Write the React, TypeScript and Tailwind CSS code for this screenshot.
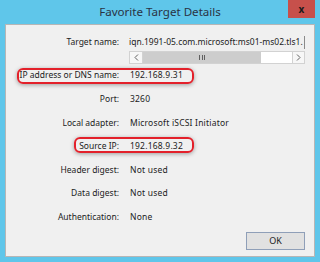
import React from "react"

const rows: { label: string; value: string }[] = [
  { label: "IP address or DNS name:", value: "192.168.9.31" },
  { label: "Port:", value: "3260" },
  { label: "Local adapter:", value: "Microsoft iSCSI Initiator" },
  { label: "Source IP:", value: "192.168.9.32" },
  { label: "Header digest:", value: "Not used" },
  { label: "Data digest:", value: "Not used" },
  { label: "Authentication:", value: "None" },
]

function Row({ label, value }: { label: string; value: string }) {
  return (
    <div className="flex h-[23.6px] items-center">
      <div className="w-[108px] shrink-0 whitespace-nowrap text-right">{label}</div>
      <div className="ml-[11px] whitespace-nowrap tracking-[0.2px]">{value}</div>
    </div>
  )
}

export default function App() {
  return (
    <div
      className="flex h-[262px] w-[320px] flex-col bg-[#5fc6ea] text-[8.5px] text-[#222]"
      style={{ fontFamily: '"Noto Sans", "Open Sans", sans-serif' }}
    >
      {/* title bar */}
      <div className="relative flex h-[24px] shrink-0 items-center justify-center">
        <span className="pb-px text-[11.6px] text-[#2a3344]">Favorite Target Details</span>
        <button className="absolute right-[5px] top-0 flex h-[18px] w-[27px] items-center justify-center bg-[#c7504b] text-[10px] font-bold leading-none text-[#1a1a1a]">
          x
        </button>
      </div>

      {/* body */}
      <div className="relative mx-[5px] mb-[5px] flex flex-1 flex-col border border-[#b6b6b6] bg-[#f0f0f0] pl-[5px] pt-[9px]">
        <div className="flex h-[16px] items-center">
          <div className="w-[108px] shrink-0 text-right">Target name:</div>
          <div className="ml-[9px] flex h-[13px] w-[177px] items-center overflow-hidden whitespace-nowrap border-r border-[#8a8a8a] pl-[1px]">
            iqn.1991-05.com.microsoft:ms01-ms02.tls1.
          </div>
        </div>

        {/* horizontal scrollbar */}
        <div className="ml-[118px] mt-px flex h-[13px] w-[176px] border border-[#d2d2d2] bg-white">
          <div className="flex w-[13px] items-center justify-center border-r border-[#d2d2d2] bg-[#f7f7f7]">
            <svg width="5" height="7" viewBox="0 0 5 7">
              <path d="M4 0.5 L1 3.5 L4 6.5" fill="none" stroke="#606060" strokeWidth="1" />
            </svg>
          </div>
          <div className="flex w-[118px] items-center justify-center gap-[1.5px] bg-[#cdcdcd]">
            <div className="h-[5px] w-px bg-[#606060]" />
            <div className="h-[5px] w-px bg-[#606060]" />
            <div className="h-[5px] w-px bg-[#606060]" />
          </div>
          <div className="flex-1" />
          <div className="flex w-[12px] items-center justify-center border-l border-[#d2d2d2] bg-[#f7f7f7]">
            <svg width="5" height="7" viewBox="0 0 5 7">
              <path d="M1 0.5 L4 3.5 L1 6.5" fill="none" stroke="#606060" strokeWidth="1" />
            </svg>
          </div>
        </div>

        <div>
          {rows.map((r) => (
            <Row key={r.label} label={r.label} value={r.value} />
          ))}
        </div>

        <div className="mb-[6px] mt-auto flex justify-end pr-[9px]">
          <button className="h-[18px] w-[59px] border border-[#8f9fb8] bg-[#e1e1e1] text-[9px] text-[#222]">OK</button>
        </div>

        {/* red annotation outlines */}
        <div className="absolute left-[11px] top-[43px] h-[16px] w-[177px] rounded-[6px] border-2 border-[#e3212b] shadow-[0_1px_4px_rgba(0,0,0,0.35)]" />
        <div className="absolute left-[68px] top-[112px] h-[16px] w-[120px] rounded-[6px] border-2 border-[#e3212b] shadow-[0_1px_4px_rgba(0,0,0,0.35)]" />
      </div>
    </div>
  )
}
